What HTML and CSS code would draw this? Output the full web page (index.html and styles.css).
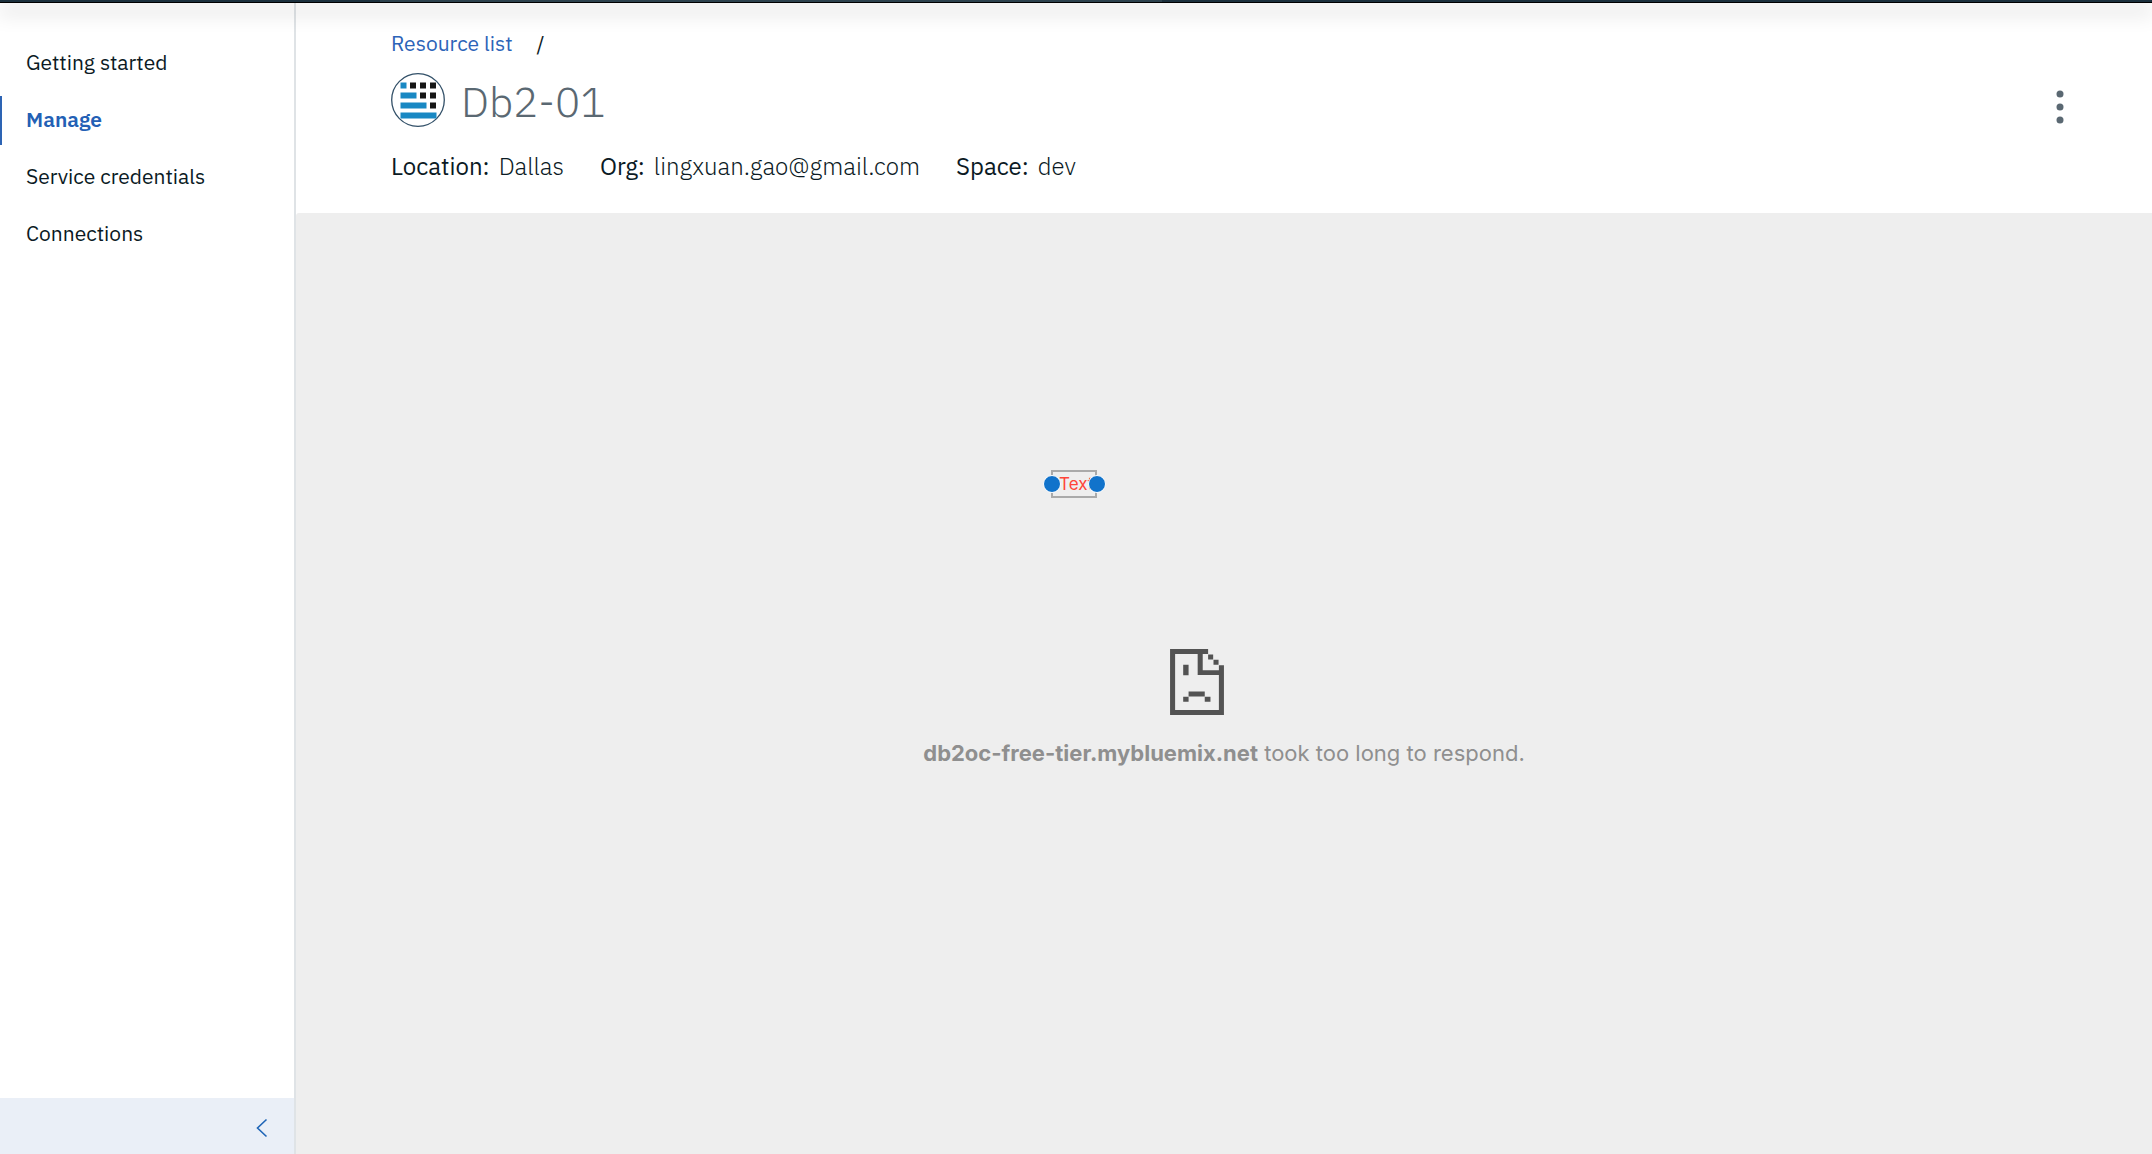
FILE: index.html
```html
<!DOCTYPE html>
<html lang="en">

<head>
    <meta charset="UTF-8">
    <meta name="viewport" content="width=device-width, initial-scale=1.0">
    <title>Db2-01</title>
    <link rel="stylesheet" href="styles.css">
</head>

<body>
    <div class="topbar">
        <div class="topbar-search"></div>
    </div>

    <div class="layout">
        <aside class="sidebar">
            <nav class="side-nav">
                <a href="#">Getting started</a>
                <a href="#" class="active">Manage</a>
                <a href="#">Service credentials</a>
                <a href="#">Connections</a>
            </nav>
            <button type="button" class="collapse" aria-label="Collapse">
                <svg width="12" height="20" viewBox="0 0 12 20">
                    <path d="M10.5 1.5L1.5 10l9 8.5" fill="none" stroke="currentColor" stroke-width="1.6" />
                </svg>
            </button>
        </aside>

        <main class="content">
            <header class="service-header">
                <div class="service-info">
                    <div class="breadcrumb">
                        <a href="#">Resource list</a>
                        <span>/</span>
                    </div>
                    <div class="service-title">
                        <svg width="54" height="54" viewBox="0 0 54 54">
                            <circle cx="27" cy="27" r="26.3" fill="#fff" stroke="#325068" stroke-width="1.3" />
                            <g fill="#1988c3">
                                <path d="M9.5 9.5h6v6h-6zM9.5 19.5h16v6h-16zM9.5 29.5h26v6h-26zM9.5 39.5h36v6h-36z" />
                            </g>
                            <g fill="#171717">
                                <path d="M19 9.500h6v6h-6zM29 9.500h6v6h-6zM39 9.500h6v6h-6zM29 19.500h6v6h-6zM39 19.500h6v6h-6zM39 29.500h6v6h-6z" />
                            </g>
                        </svg>
                        <h1>Db2-01</h1>
                    </div>
                    <dl class="details">
                        <div><dt>Location:</dt><dd>Dallas</dd></div>
                        <div><dt>Org:</dt><dd>lingxuan.gao@gmail.com</dd></div>
                        <div><dt>Space:</dt><dd>dev</dd></div>
                    </dl>
                </div>
                <button type="button" class="overflow-menu" aria-label="More actions">
                    <svg width="8" height="34" viewBox="0 0 8 34" fill="#5a6872">
                        <circle cx="4" cy="4" r="3.5" />
                        <circle cx="4" cy="17" r="3.5" />
                        <circle cx="4" cy="30" r="3.5" />
                    </svg>
                </button>
            </header>

            <section class="error-page">
                <div class="text-note">
                    <span>Text</span>
                    <i class="handle handle-left"></i>
                    <i class="handle handle-right"></i>
                </div>
                <svg class="error-icon" width="54" height="66" viewBox="0 0 160 196" fill="#535353">
                    <path d="M0 0h113v15H97v48h48V48h15v148H0zM15 15v166h130V77H82V15z" fill-rule="evenodd" />
                    <path d="M113 16h15v15h-15zM129 32h15v15h-15zM39 47h16v31H39zM55 126h48v15H55zM39 142h16v15H39zM103 142h17v15h-17z" />
                </svg>
                <p><strong>db2oc-free-tier.mybluemix.net</strong> took too long to respond.</p>
            </section>
        </main>
    </div>
</body>

</html>
```

FILE: styles.css
```css
* {
    box-sizing: border-box;
}

body {
    display: flex;
    flex-direction: column;
    min-height: 100vh;
    margin: 0;
    font-family: "IBM Plex Sans", Roboto, sans-serif;
    font-size: 21px;
    color: #0b1a24;
    background-color: #fff;
}

a {
    color: inherit;
    text-decoration: none;
}

button {
    border: none;
    background: none;
    cursor: pointer;
}

.topbar {
    position: relative;
    z-index: 1;
    height: 3px;
    padding: 0 46% 0 380px;
    background-color: #1b303d;
    border-bottom: 1px solid #000;
    box-shadow: 0 8px 20px 2px rgba(0, 0, 0, 0.17);
}

.topbar-search {
    height: 2px;
    background-color: #2d424e;
}

.layout {
    display: flex;
    flex: 1;
}

.sidebar {
    display: flex;
    flex-direction: column;
    width: 296px;
    border-right: 2px solid #dfe3e6;
}

.side-nav {
    display: flex;
    flex: 1;
    flex-direction: column;
    gap: 8px;
    padding-top: 36px;
}

.side-nav a {
    padding: 0 0 2px 24px;
    border-left: 2px solid transparent;
    line-height: 47px;
}

.side-nav .active {
    border-color: #2d64b4;
    color: #2360b5;
    font-weight: 600;
}

.collapse {
    display: flex;
    align-items: center;
    justify-content: flex-end;
    height: 56px;
    padding: 4px 26px 0;
    background-color: #eaeff7;
    color: #1f65b7;
}

.content {
    display: flex;
    flex: 1;
    flex-direction: column;
}

.service-header {
    display: flex;
    justify-content: space-between;
    padding: 25px 88px 32px 95px;
}

.breadcrumb {
    display: flex;
    gap: 24px;
    line-height: 30px;
}

.breadcrumb a {
    color: #2c64b8;
}

.service-title {
    display: flex;
    align-items: flex-start;
    gap: 16px;
    margin-top: 15px;
}

h1 {
    margin: 0;
    font-size: 42px;
    font-weight: 300;
    line-height: 58px;
    color: #5a6872;
}

.details {
    display: flex;
    gap: 36px;
    margin: 20px 0 0;
    font-size: 24px;
    line-height: 30px;
}

.details div {
    display: flex;
    gap: 9px;
}

.details dd {
    margin: 0;
    font-weight: 300;
}

.overflow-menu {
    align-self: center;
    padding: 8px 0 0;
}

.error-page {
    position: relative;
    display: flex;
    flex: 1;
    flex-direction: column;
    align-items: center;
    gap: 20px;
    padding-top: 436px;
    background-color: #eee;
    border-top-left-radius: 3px;
}

.error-icon {
    margin-right: 54px;
}

.error-page p {
    margin: 0;
    font-family: Inter, sans-serif;
    font-size: 22px;
    line-height: 36px;
    color: #8f8f8f;
}

/* text box being edited on top of the page */
.text-note {
    position: absolute;
    top: 257px;
    left: 755px;
    width: 46px;
    height: 28px;
    border: 2px solid #aaa;
    padding-left: 6px;
    font-family: Inter, sans-serif;
    font-size: 17px;
    line-height: 24px;
    color: #ff4438;
}

.handle {
    position: absolute;
    top: 3px;
    width: 18px;
    height: 18px;
    border: 1px solid #fff;
    border-radius: 50%;
    background-color: #1173cb;
}

.handle-left {
    left: -10px;
}

.handle-right {
    right: -11px;
}
```
